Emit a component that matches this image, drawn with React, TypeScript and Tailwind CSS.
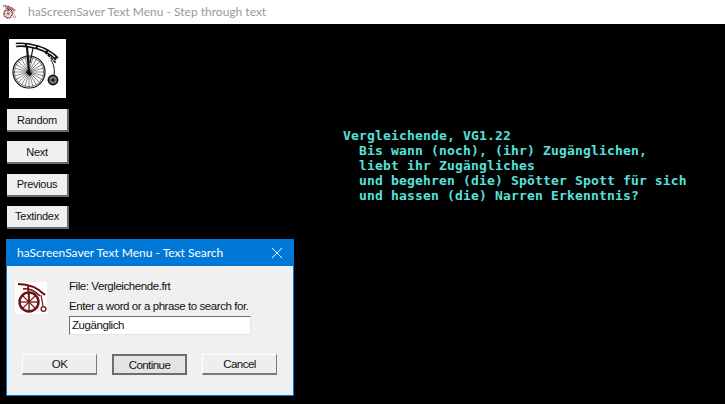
const sans = { fontFamily: '"Liberation Sans", Arial, sans-serif' };
const titleFont = { fontFamily: 'Lato, sans-serif' };

// big penny-farthing for the logo
function Bike() {
    const spokes = Array.from({ length: 24 }, (_, i) => (i * Math.PI) / 12);
    return (
        <svg width="57" height="59" viewBox="0 0 57 59">
            <g stroke="#111" fill="none">
                <path d="M7 6 C20 4.5 38 9 48 20" strokeWidth="4.4" />
                <path d="M7 6 C20 4.5 38 9 48 20" strokeWidth="1.3" stroke="#fff" strokeDasharray="9 2" />
                <path d="M36 13 L47 24" strokeWidth="1.6" strokeDasharray="3 1" />
                <path d="M18 8 L20 33" strokeWidth="2.2" />
                <path d="M24 9 L21 24" strokeWidth="1.2" />
                <path d="M42 21 C46 27 46 34 44 41" strokeWidth="1" />
                <circle cx="20" cy="33" r="16" strokeWidth="1.2" />
                <circle cx="20" cy="33" r="14.7" strokeWidth="0.5" />
                {spokes.map((a, i) => (
                    <line key={i} x1={20} y1={33} x2={20 + 15 * Math.cos(a)} y2={33 + 15 * Math.sin(a)} strokeWidth="0.5" />
                ))}
                <path d="M18 32 L22 36" strokeWidth="3.6" />
                <circle cx="44" cy="41" r="4.6" strokeWidth="1.7" fill="#777" />
            </g>
            <circle cx="44" cy="41" r="1.6" fill="#111" />
        </svg>
    );
}

// small dark red version used as window icons
function SmallBike({ size, dotted }: { size: number; dotted?: boolean }) {
    const spokes = [0, 1, 2, 3].map(i => (i * Math.PI) / 4);
    return (
        <svg width={size} height={size} viewBox="0 0 32 32">
            <g stroke="#6e1210" fill="none" strokeDasharray={dotted ? '2.2 1.4' : undefined}>
                <path d="M3 2 C12 2 22 5 30 13" strokeWidth={dotted ? 3.4 : 2.2} />
                <path d="M8 7 C14 6 20 9 25 14" strokeWidth={dotted ? 3 : 1.6} />
                <path d="M13 4 L14 20" strokeWidth="1.6" />
                <circle cx="14" cy="20" r="9.5" strokeWidth={dotted ? 3.4 : 2.4} />
                {spokes.map((a, i) => (
                    <line key={i} x1={14 - 9 * Math.cos(a)} y1={20 - 9 * Math.sin(a)} x2={14 + 9 * Math.cos(a)} y2={20 + 9 * Math.sin(a)} strokeWidth="1.3" />
                ))}
                <path d="M26 13 L28 24" strokeWidth="1.2" />
                <circle cx="28.5" cy="27" r="2.4" strokeWidth="1.3" />
            </g>
        </svg>
    );
}

function SideButton({ label }: { label: string }) {
    return (
        <button className="w-[62px] h-[23px] bg-[#f0f0f0] border-r-2 border-b-2 border-[#6b6b6b] text-[11px] tracking-[-0.3px] leading-[20px] text-[#111]" style={sans}>
            {label}
        </button>
    );
}

function DialogButton({ label, active }: { label: string; active?: boolean }) {
    return (
        <button
            className={
                active
                    ? 'w-[75px] h-[21px] bg-[#e4e4e4] border-2 border-[#6d6d6d] text-[11.5px] tracking-[-0.55px] leading-[16px] text-[#111]'
                    : 'w-[75px] h-[21px] bg-[#eeeeee] border border-white border-r-[#7a7a7a] border-b-[#7a7a7a] border-b-2 text-[11.5px] tracking-[-0.55px] leading-[18px] text-[#111]'
            }
            style={sans}
        >
            {label}
        </button>
    );
}

export default function App() {
    return (
        <div className="relative w-[725px] h-[404px] overflow-hidden flex flex-col bg-black">
            <div className="h-6 shrink-0 bg-white flex items-center pl-[2px]">
                <SmallBike size={14} dotted />
                <span className="ml-3 text-[12px] text-[#999999]" style={titleFont}>
                    haScreenSaver Text Menu - Step through text
                </span>
            </div>

            <div className="flex-1 flex">
                <div className="w-[343px] shrink-0 pl-[7px] pt-[15px] flex flex-col items-start">
                    <div className="ml-[2px] w-[57px] h-[59px] bg-white">
                        <Bike />
                    </div>
                    <div className="mt-[11px] flex flex-col gap-[9.3px]">
                        <SideButton label="Random" />
                        <SideButton label="Next" />
                        <SideButton label="Previous" />
                        <SideButton label="Textindex" />
                    </div>
                </div>

                <pre
                    className="pt-[104px] text-[13px] leading-[15px] font-bold tracking-[0.17px] text-[#58e2dc]"
                    style={{ fontFamily: '"DejaVu Sans Mono", monospace' }}
                >
{`Vergleichende, VG1.22
  Bis wann (noch), (ihr) Zugänglichen,
  liebt ihr Zugängliches
  und begehren (die) Spötter Spott für sich
  und hassen (die) Narren Erkenntnis?`}
                </pre>
            </div>

            {/* search dialog window */}
            <div className="absolute left-[6px] top-[239px] w-[288px] h-[157px] bg-[#f0f0f0] border border-[#0078d7] flex flex-col">
                <div className="h-[26px] shrink-0 bg-[#0078d7] flex items-center justify-between pl-[10px] pr-[10px]">
                    <span className="text-[12px] text-white" style={titleFont}>
                        haScreenSaver Text Menu - Text Search
                    </span>
                    <svg width="12" height="12" viewBox="0 0 12 12" stroke="#fff" strokeWidth="1">
                        <path d="M1 1 L11 11 M11 1 L1 11" />
                    </svg>
                </div>

                <div className="flex pl-2 pt-4">
                    <div className="w-8 h-8 bg-white shrink-0">
                        <SmallBike size={32} />
                    </div>
                    <div className="ml-[22px] text-[11.5px] tracking-[-0.43px] text-[#111]" style={sans}>
                        <div className="leading-[14px] mt-[-3px]">File: Vergleichende.frt</div>
                        <div className="leading-[14px] mt-[6px]">Enter a word or a phrase to search for.</div>
                        <div className="mt-[3px] w-[182px] h-[19px] bg-white border border-[#e4e4e4] border-l-[#6d6d6d] border-t-[#6d6d6d] pl-[2px] leading-[17px]">
                            Zugänglich
                        </div>
                    </div>
                </div>

                <div className="flex gap-[15px] pl-[15px] mt-[19px]">
                    <DialogButton label="OK" />
                    <DialogButton label="Continue" active />
                    <DialogButton label="Cancel" />
                </div>
            </div>
        </div>
    );
}
